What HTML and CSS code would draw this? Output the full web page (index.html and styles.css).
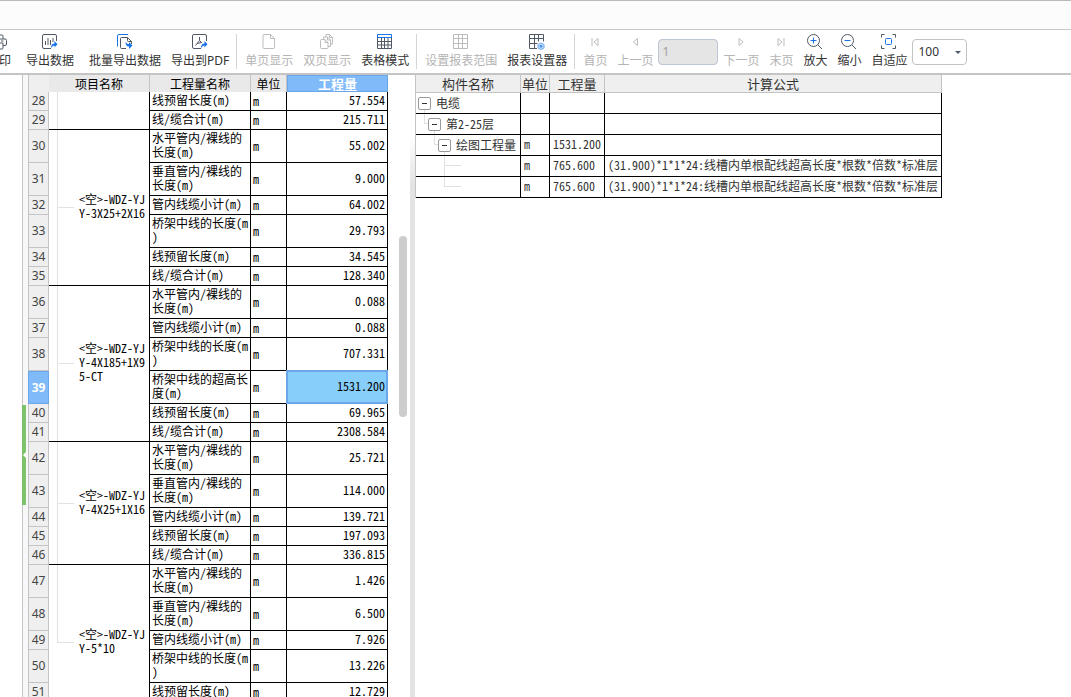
FILE: index.html
```
<!DOCTYPE html>
<html lang="zh-CN">
<head>
<meta charset="utf-8">
<title>报表</title>
<link rel="stylesheet" href="styles.css">
</head>
<body>
<div class="titlebar"></div>
<div class="toolbar">
  <button class="tool tool-first"><svg class="icon" viewBox="0 0 16 16"><path d="M4 5V2a1 1 0 0 1 1-1h6a1 1 0 0 1 1 1v3M4 11.500H2a1.500 1.500 0 0 1-1.500-1.500V6.500A1.500 1.500 0 0 1 2 5h12a1.500 1.500 0 0 1 1.500 1.500V10a1.500 1.500 0 0 1-1.500 1.500h-2M4 9h8v5a1 1 0 0 1-1 1H5a1 1 0 0 1-1-1zM10 7h2.500"/></svg><span>打印</span></button>
  <button class="tool spaced"><svg class="icon" viewBox="0 0 16 16"><path d="M14.500 7V2a1.500 1.500 0 0 0-1.500-1.500H2A1.500 1.500 0 0 0 .5 2v11A1.500 1.500 0 0 0 2 14.500h7M3.500 7v4M6 4v7M8.500 6v5M11 4v4"/><path class="blue-fill" d="M9 14.500c0-3.500 1-5 3.500-5V7l3 3.300-3 3.200v-2c-1.500 0-2.500 1-3.500 3z"/></svg><span>导出数据</span></button>
  <button class="tool spaced"><svg class="icon" viewBox="0 0 16 16"><path class="blue" d="M.5 12.500V2A1.500 1.500 0 0 1 2 .5h9"/><path d="M9 14.500H4.500a1 1 0 0 1-1-1v-9a1 1 0 0 1 1-1h6l4 4V10M10.500 3.500v3a1 1 0 0 0 1 1h3"/><path class="blue-fill" d="M8.500 7.500c1 2 2 2.500 3.500 2.500V8l3.500 3.500-3.500 3.500v-2.500c-2.500 0-3.500-1.500-3.500-5z"/></svg><span>批量导出数据</span></button>
  <button class="tool"><svg class="icon" viewBox="0 0 16 16"><path d="M14.500 7V2a1.500 1.500 0 0 0-1.500-1.500H2A1.500 1.500 0 0 0 .5 2v11A1.500 1.500 0 0 0 2 14.500h7M7.500 3v3.500L3.500 11.500M7.500 6.500L10 9M5 9.500L9.500 8.500"/><path class="blue-fill" d="M9 14.500c0-3.500 1-5 3.500-5V7l3 3.300-3 3.200v-2c-1.500 0-2.500 1-3.500 3z"/></svg><span>导出到PDF</span></button>
  <i class="sep"></i>
  <button class="tool" disabled><svg class="icon" viewBox="0 0 16 16"><path d="M3 .5h6.500l4 4v9a1 1 0 0 1-1 1H3a1 1 0 0 1-1-1v-12a1 1 0 0 1 1-1zM9.500 .5v4h4"/></svg><span>单页显示</span></button>
  <button class="tool" disabled><svg class="icon" viewBox="0 0 16 16"><path d="M2.500 5.500H6l3 3v5a1 1 0 0 1-1 1H2.500a1 1 0 0 1-1-1v-7a1 1 0 0 1 1-1zM6 5.500v3h3M4.500 5.500V3h4l3 3v6.500H9M8.500 3v3h3M7 3V.5h3.500l3 3V10h-2M10.500 .5v3h3"/></svg><span>双页显示</span></button>
  <button class="tool"><svg class="icon" viewBox="0 0 16 16"><path d="M.5 1v13.500h14V1M.5 7.500h14M.5 11h14M4.500 4v10.500M7.500 4v10.500M11 4v10.500"/><path class="blue" d="M.5 3.500v-3h14v3z"/></svg><span>表格模式</span></button>
  <i class="sep"></i>
  <button class="tool" disabled><svg class="icon" viewBox="0 0 16 16"><path d="M.5 .5h14v14H.5zM.5 4.500h14M.5 9.500h14M5.500 .5v14M9.500 .5v14"/></svg><span>设置报表范围</span></button>
  <button class="tool"><svg class="icon" viewBox="0 0 16 16"><path d="M8 14.500H.5V.5h14v7M.5 4.500h14M.5 9.500h8M5.500 .5v14M9.500 .5v7"/><path class="gear" d="M12 9l3 1.500v3.500l-3 1.500-3-1.500v-3.500z"/><circle class="blue" cx="12" cy="12.300" r="1"/></svg><span>报表设置器</span></button>
  <i class="sep"></i>
  <button class="tool" disabled><svg class="icon" viewBox="0 0 16 16"><path d="M5 4v8M11 4.500v7L7 8z"/></svg><span>首页</span></button>
  <button class="tool" disabled><svg class="icon" viewBox="0 0 16 16"><path d="M10.500 4.500v7L6.500 8z"/></svg><span>上一页</span></button>
  <input class="page" type="text" value="1" aria-label="页码" disabled>
  <button class="tool" disabled><svg class="icon" viewBox="0 0 16 16"><path d="M6 4.500v7L10 8z"/></svg><span>下一页</span></button>
  <button class="tool" disabled><svg class="icon" viewBox="0 0 16 16"><path d="M5 4.500v7L9 8zM11 4v8"/></svg><span>末页</span></button>
  <button class="tool"><svg class="icon" viewBox="0 0 16 16"><circle cx="6.500" cy="6.500" r="6"/><path d="M11 11L15 15"/><path class="blue" d="M3.500 6.500h6M6.500 3.500v6"/></svg><span>放大</span></button>
  <button class="tool"><svg class="icon" viewBox="0 0 16 16"><circle cx="6.500" cy="6.500" r="6"/><path d="M11 11L15 15"/><path class="blue" d="M3.500 6.500h6"/></svg><span>缩小</span></button>
  <button class="tool"><svg class="icon" viewBox="0 0 16 16"><path d="M3.500 .5h-3v3M11.500 .5h3v3M3.500 14.500h-3v-3M11.500 14.500h3v-3"/><path class="blue" d="M4.500 5.500a1 1 0 0 1 1-1h4a1 1 0 0 1 1 1v4a1 1 0 0 1-1 1h-4a1 1 0 0 1-1-1z"/></svg><span>自适应</span></button>
  <div class="zoom"><select aria-label="缩放比例"><option>100</option></select></div>
</div>
<main class="main">
  <div class="nav"></div>
  <div class="split-left"><button class="collapse" aria-label="展开"></button></div>
  <section class="report">
    <table class="sheet">
      <colgroup><col class="c-no"><col class="c-item"><col class="c-name"><col class="c-unit"><col class="c-qty"></colgroup>
      <thead><tr><th class="no"></th><th>项目名称</th><th>工程量名称</th><th>单位</th><th class="active">工程量</th></tr></thead>
      <tbody>
        <tr><th class="no">28</th><td class="item line" rowspan="2"></td><td>线预留长度(m)</td><td class="unit">m</td><td class="qty">57.554</td></tr>
        <tr><th class="no">29</th><td>线/缆合计(m)</td><td class="unit">m</td><td class="qty">215.711</td></tr>
        <tr class="tall"><th class="no">30</th><td class="item line branch" rowspan="6">&lt;空&gt;-WDZ-YJY-3X25+2X16</td><td>水平管内/裸线的长度(m)</td><td class="unit">m</td><td class="qty">55.002</td></tr>
        <tr class="tall"><th class="no">31</th><td>垂直管内/裸线的长度(m)</td><td class="unit">m</td><td class="qty">9.000</td></tr>
        <tr><th class="no">32</th><td>管内线缆小计(m)</td><td class="unit">m</td><td class="qty">64.002</td></tr>
        <tr class="tall"><th class="no">33</th><td>桥架中线的长度(m)</td><td class="unit">m</td><td class="qty">29.793</td></tr>
        <tr><th class="no">34</th><td>线预留长度(m)</td><td class="unit">m</td><td class="qty">34.545</td></tr>
        <tr><th class="no">35</th><td>线/缆合计(m)</td><td class="unit">m</td><td class="qty">128.340</td></tr>
        <tr class="tall"><th class="no">36</th><td class="item line branch" rowspan="6">&lt;空&gt;-WDZ-YJY-4X185+1X95-CT</td><td>水平管内/裸线的长度(m)</td><td class="unit">m</td><td class="qty">0.088</td></tr>
        <tr><th class="no">37</th><td>管内线缆小计(m)</td><td class="unit">m</td><td class="qty">0.088</td></tr>
        <tr class="tall"><th class="no">38</th><td>桥架中线的长度(m)</td><td class="unit">m</td><td class="qty">707.331</td></tr>
        <tr class="tall"><th class="no active">39</th><td>桥架中线的超高长度(m)</td><td class="unit">m</td><td class="qty selected">1531.200</td></tr>
        <tr><th class="no">40</th><td>线预留长度(m)</td><td class="unit">m</td><td class="qty">69.965</td></tr>
        <tr><th class="no">41</th><td>线/缆合计(m)</td><td class="unit">m</td><td class="qty">2308.584</td></tr>
        <tr class="tall"><th class="no">42</th><td class="item line branch" rowspan="5">&lt;空&gt;-WDZ-YJY-4X25+1X16</td><td>水平管内/裸线的长度(m)</td><td class="unit">m</td><td class="qty">25.721</td></tr>
        <tr class="tall"><th class="no">43</th><td>垂直管内/裸线的长度(m)</td><td class="unit">m</td><td class="qty">114.000</td></tr>
        <tr><th class="no">44</th><td>管内线缆小计(m)</td><td class="unit">m</td><td class="qty">139.721</td></tr>
        <tr><th class="no">45</th><td>线预留长度(m)</td><td class="unit">m</td><td class="qty">197.093</td></tr>
        <tr><th class="no">46</th><td>线/缆合计(m)</td><td class="unit">m</td><td class="qty">336.815</td></tr>
        <tr class="tall"><th class="no">47</th><td class="item last branch" rowspan="6">&lt;空&gt;-WDZ-YJY-5*10</td><td>水平管内/裸线的长度(m)</td><td class="unit">m</td><td class="qty">1.426</td></tr>
        <tr class="tall"><th class="no">48</th><td>垂直管内/裸线的长度(m)</td><td class="unit">m</td><td class="qty">6.500</td></tr>
        <tr><th class="no">49</th><td>管内线缆小计(m)</td><td class="unit">m</td><td class="qty">7.926</td></tr>
        <tr class="tall"><th class="no">50</th><td>桥架中线的长度(m)</td><td class="unit">m</td><td class="qty">13.226</td></tr>
        <tr><th class="no">51</th><td>线预留长度(m)</td><td class="unit">m</td><td class="qty">12.729</td></tr>
        <tr><th class="no"></th><td></td><td></td><td></td></tr>
      </tbody>
    </table>
    <div class="scrollbar"><div class="thumb"></div></div>
  </section>
  <div class="split-right"></div>
  <section class="detail">
    <table class="formula">
      <colgroup><col class="f-name"><col class="f-unit"><col class="f-qty"><col class="f-expr"></colgroup>
      <thead><tr><th>构件名称</th><th>单位</th><th>工程量</th><th>计算公式</th></tr></thead>
      <tbody>
        <tr><td class="node lv1"><div><button class="toggle" aria-label="折叠"></button>电缆</div></td><td></td><td></td><td></td></tr>
        <tr><td class="node lv2"><div><button class="toggle" aria-label="折叠"></button>第2-25层</div></td><td></td><td></td><td></td></tr>
        <tr><td class="node lv3"><div><button class="toggle" aria-label="折叠"></button>绘图工程量</div></td><td>m</td><td>1531.200</td><td></td></tr>
        <tr><td class="leaf"></td><td>m</td><td>765.600</td><td>(31.900)*1*1*24:线槽内单根配线超高长度*根数*倍数*标准层</td></tr>
        <tr><td class="leaf leaf-end"></td><td>m</td><td>765.600</td><td>(31.900)*1*1*24:线槽内单根配线超高长度*根数*倍数*标准层</td></tr>
      </tbody>
    </table>
  </section>
</main>
</body>
</html>
```
FILE: styles.css
```
* { box-sizing: border-box; }

body {
  margin: 0;
  height: 100vh;
  overflow: hidden;
  display: flex;
  flex-direction: column;
  background: #fff;
  color: #000;
  font: 12px/14px "Noto Sans Mono CJK SC", "Noto Sans CJK SC", sans-serif;
}

button, input, select { font: inherit; color: inherit; }

.titlebar {
  flex: none;
  height: 29px;
  border-top: 1px solid #b9b9b9;
  background: #fcfcfc;
}

/* toolbar */
.toolbar {
  flex: none;
  display: flex;
  align-items: center;
  height: 46px;
  overflow: hidden;
  border-top: 1px solid #c8c8c8;
  border-bottom: 2px solid #c4c4c4;
  font-family: "Noto Sans", "Noto Sans CJK SC", sans-serif;
  color: #333;
}

.tool {
  flex: none;
  display: flex;
  flex-direction: column;
  align-items: center;
  gap: 3px;
  padding: 0 5px;
  border: 0;
  background: none;
  line-height: 16px;
  white-space: nowrap;
}
.tool:disabled { color: #b4b4b4; }
.tool-first { margin-left: -18px; }
.spaced { margin-left: 5px; }

.icon {
  width: 16px;
  height: 16px;
  fill: none;
  stroke: #505866;
  stroke-width: 1;
}
.tool:disabled .icon { stroke: #bdbdbd; }
.icon .blue { stroke: #1a73e8; }
.icon .blue-fill { fill: #1a73e8; stroke: none; }
.icon .gear { fill: #cfe5ff; stroke: #69a7f2; }

.sep {
  flex: none;
  width: 1px;
  height: 35px;
  margin: 0 3px 0 2px;
  background: #d4d4d4;
}

.page, .zoom select {
  height: 26px;
  border: 1px solid #c3c3c3;
  border-radius: 4px;
  background: #fff;
}
.page {
  flex: none;
  width: 60px;
  padding: 0 3px;
  border-color: #bcc6d6;
  background: #e5e5e5;
  color: #a0a0a0;
}
.zoom { flex: none; position: relative; }
.zoom select {
  width: 55px;
  padding: 0 5px;
  appearance: none;
  display: block;
}
.zoom::after {
  content: "";
  position: absolute;
  right: 6px;
  top: 12px;
  border: 3px solid transparent;
  border-top-color: #505866;
  border-bottom: 0;
  pointer-events: none;
}

/* panes */
.main {
  flex: 1;
  min-height: 0;
  display: flex;
}
.nav { flex: none; width: 22px; }
.split-left {
  flex: none;
  width: 6px;
  border-left: 1px solid #c4c4c4;
  background: #f8f8f8;
}
.collapse {
  display: flex;
  align-items: center;
  justify-content: flex-end;
  width: 4px;
  height: 100px;
  margin: 330px 0 0 -1px;
  padding: 0;
  border: 0;
  background: #7cc36a;
}
.collapse::after {
  content: "";
  border: 3px solid transparent;
  border-right-color: #fff;
  border-left: 0;
}
.report {
  flex: none;
  display: flex;
  width: 382px;
  overflow: hidden;
}
.scrollbar {
  width: 8px;
  margin-left: 11px;
  padding-top: 161px;
}
.thumb {
  height: 181px;
  border-radius: 4px;
  background: #cdcdcd;
}
.split-right {
  flex: none;
  width: 5px;
  background: linear-gradient(#fff 60px, #e3e3e3 110px);
}
.detail {
  flex: 1;
  min-width: 0;
  overflow: hidden;
}

/* tables */
table {
  flex: none;
  table-layout: fixed;
  border-collapse: separate;
  border-spacing: 0;
  font-feature-settings: "hwid";
}
th { font-weight: 400; padding: 0; }
td {
  padding: 0 2px;
  border: solid #000;
  border-width: 0 1px 1px 0;
  line-break: anywhere;
}

.sheet { width: 360px; }
.c-no { width: 21px; }
.c-item, .c-name, .c-qty { width: 101px; }
.c-unit { width: 36px; }
.sheet thead th {
  height: 17px;
  border-right: 1px solid #c4c4c4;
  background: #e9e9e9;
}
.sheet tbody tr { height: 19px; }
.sheet tbody .tall { height: 33px; }
.sheet td { padding-bottom: 3px; }
.sheet .unit { padding-bottom: 1px; }

.sheet .no {
  border: solid #c4c4c4;
  border-width: 0 1px 1px 1px;
  background: #efefef;
  color: #444;
  font-family: "Noto Sans", sans-serif;
  font-feature-settings: normal;
}
.sheet thead .no { border-bottom: 0; border-right: 0; }
.sheet .active, .sheet .no.active {
  border: 1px solid #6ba6ea;
  background: #80baf9;
  color: #fff;
  font-weight: 700;
}
.sheet thead .active { font-size: 13px; }

.sheet .qty { text-align: right; }
.sheet .selected {
  position: relative;
  background: #87cefa;
}
.selected::after {
  content: "";
  position: absolute;
  inset: -1px;
  border: 2px solid #6ba6e8;
}

.sheet .item {
  padding-left: 30px;
  background-repeat: no-repeat;
}
.sheet .line {
  background-image: linear-gradient(#e2e2e2, #e2e2e2), linear-gradient(#e2e2e2, #e2e2e2);
  background-size: 1px 100%, 0 0;
  background-position: 8px 0, 8px 50%;
}
.sheet .line.branch { background-size: 1px 100%, 17px 1px; }
.sheet .last {
  background-image: linear-gradient(#e2e2e2, #e2e2e2), linear-gradient(#e2e2e2, #e2e2e2);
  background-size: 1px 50%, 17px 1px;
  background-position: 8px 0, 8px 50%;
}

.formula {
  width: 527px;
  border-left: 1px solid #c4c4c4;
  color: #333;
  white-space: nowrap;
}
.f-name { width: 105px; }
.f-unit { width: 29px; }
.f-qty { width: 55px; }
.f-expr { width: 337px; }
.formula th {
  height: 18px;
  border: solid #c4c4c4;
  border-width: 0 1px 1px 0;
  background: #efefef;
  font-size: 13px;
}
.formula tbody tr { height: 21px; }
.formula td { padding: 0 3px 2px; }

.formula .node { padding: 0 2px; }
.node div {
  display: flex;
  align-items: center;
  gap: 5px;
}
.formula .lv2 { padding-left: 12px; }
.formula .lv3 { padding-left: 22px; }
.toggle {
  flex: none;
  display: flex;
  align-items: center;
  justify-content: center;
  width: 13px;
  height: 13px;
  padding: 0;
  border: 1px solid #999;
  border-radius: 2px;
  background: #fff;
}
.toggle::before {
  content: "";
  width: 5px;
  height: 1px;
  background: #333;
}

/* tree connectors */
.node, .leaf { background-repeat: no-repeat; }
.lv1 {
  background-image: linear-gradient(#e0e0e0, #e0e0e0);
  background-size: 1px 4px;
  background-position: 8px 100%;
}
.lv2, .lv3 {
  background-image: linear-gradient(#e0e0e0, #e0e0e0), linear-gradient(#e0e0e0, #e0e0e0), linear-gradient(#e0e0e0, #e0e0e0);
  background-size: 1px 10px, 4px 1px, 1px 4px;
}
.lv2 { background-position: 8px 0, 8px 9px, 18px 100%; }
.lv3 { background-position: 18px 0, 18px 9px, 28px 100%; }
.leaf {
  background-image: linear-gradient(#e0e0e0, #e0e0e0), linear-gradient(#e0e0e0, #e0e0e0);
  background-size: 1px 20px, 17px 1px;
  background-position: 28px 0, 28px 9px;
}
.leaf-end { background-size: 1px 10px, 17px 1px; }
```
